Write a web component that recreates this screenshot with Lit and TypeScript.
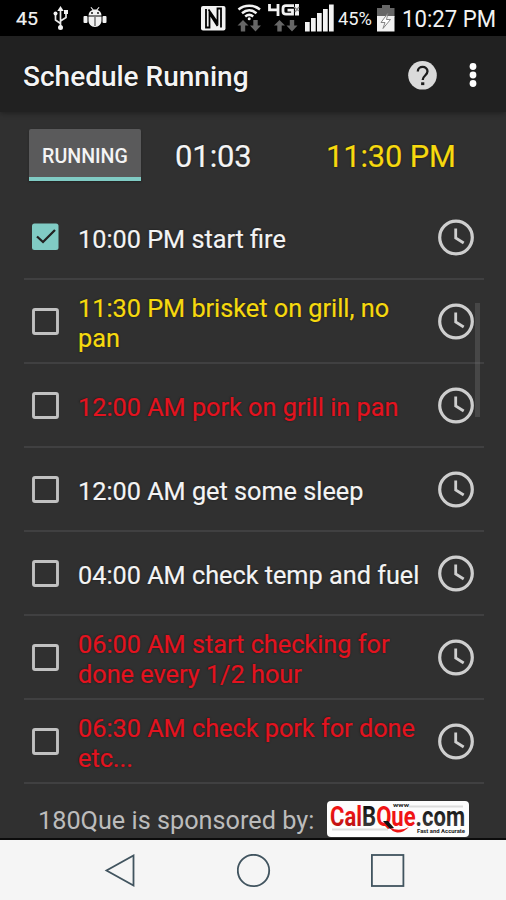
import { LitElement, html, css, svg } from "lit";
import { customElement, property } from "lit/decorators.js";
import { classMap } from "lit/directives/class-map.js";

interface Task {
  text: string;
  tone: "plain" | "next" | "alert";
  done?: boolean;
}

const TASKS: Task[] = [
  { text: "10:00 PM start fire", tone: "plain", done: true },
  { text: "11:30 PM brisket on grill, no pan", tone: "next" },
  { text: "12:00 AM pork on grill in pan", tone: "alert" },
  { text: "12:00 AM get some sleep", tone: "plain" },
  { text: "04:00 AM check temp and fuel", tone: "plain" },
  { text: "06:00 AM start checking for done every 1/2 hour", tone: "alert" },
  { text: "06:30 AM check pork for done etc...", tone: "alert" },
];

@customElement("status-bar")
class StatusBar extends LitElement {
  static styles = css`
    :host { display: block; height: 36px; background: #000; }
    svg { display: block; }
    text { font-family: Roboto, "Liberation Sans", sans-serif; }
    .white { fill: #f2f2f2; }
    .dim { fill: #666; }
    .wave { fill: none; stroke: #f2f2f2; stroke-width: 2.5; }
    .usb { fill: none; stroke: #e8e8e8; stroke-width: 1.7; }
    .slot { fill: none; stroke: #000; stroke-width: 1.8; }
    .net { fill: none; stroke: #f2f2f2; stroke-width: 2.8; }
  `;

  arrows(x: number) {
    return svg`
      <path class="dim" d="M${x} 25.500l5.500-5.500 5.500 5.500h-3.300v6h-4.400v-6z"/>
      <path class="dim" d="M${x + 12.5} 25.500l5.500 6 5.500-6h-3.300v-5.500h-4.400v5.500z"/>`;
  }

  render() {
    return html`<svg width="506" height="36" viewBox="0 0 506 36">
      <text class="white" x="16" y="25" font-size="19" textLength="22" lengthAdjust="spacingAndGlyphs" stroke="#f2f2f2" stroke-width=".2">45</text>
      <path class="usb" d="M60.500 27V9M60.500 23.500l-5-3.500v-6M60.500 21l5.500-3.500v-5"/>
      <path class="white" d="M60.500 6l3.200 5h-6.400z"/>
      <circle class="white" cx="60.500" cy="27.500" r="2.500"/>
      <circle class="white" cx="55.500" cy="13.500" r="2"/>
      <rect class="white" x="64" y="10" width="4" height="4"/>
      <path class="white" d="M88.500 15.500c0-3 2-5 4-5.500l-2-2.500.8-.6 2.200 2.600h3l2.200-2.600.8.6-2 2.500c2 .5 4 2.500 4 5.500zM88.500 16.500h13v4c0 3.500-2.500 6.500-6.500 6.500s-6.500-3-6.500-6.500z"/>
      <rect class="white" x="83.500" y="16" width="4" height="7" rx="1"/>
      <rect class="white" x="102.500" y="16" width="4" height="7" rx="1"/>
      <circle cx="92" cy="13" r=".9"/><circle cx="98" cy="13" r=".9"/>
      <path d="M94.600 17h.8v9h-.8z"/>

      <rect class="white" x="201" y="6" width="24.500" height="24.500" rx="2"/>
      <path class="slot" d="M206 9v18.500h3.500V13.500l8 12.500M221 27.500V8.500h-3.500v14L208.500 9.500"/>
      <path class="wave" d="M238.500 9.500c6-5 15.500-5 21.500 0M242 13.200c4.500-3.800 10-3.800 14.500 0M245.200 16.500c2.500-2 5.500-2 8 0"/>
      <circle class="white" cx="249.200" cy="18.800" r="1.500"/>
      ${this.arrows(237.5)}
      <path class="net" d="M269.500 4v5.800h9.500M278 4v12M294 5.600h-8q-3 0-3 2.800v3.200q0 2.600 3 2.600h6.500v-4h-5"/>
      <path class="white" d="M295 4h4v9h-4zM295 13h4v2.500h-4z"/>
      <path d="M294 7l5 4M295 12l4-5" stroke="#888" stroke-width="1.300"/>
      ${this.arrows(274)}
      <path class="white" d="M305 22h4.700v9.500H305zM311 18h4.700v13.500H311zM317 13h4.700v18.500H317zM323 9h4.700v22.500H323zM329 4.500h4.700v27H329z"/>
      <text class="white" x="338" y="25" font-size="18.500" textLength="34" lengthAdjust="spacingAndGlyphs">45%</text>
      <path class="dim" d="M382 5h8v3h4.500v9h-17.500V8h5z"/>
      <path class="white" d="M377 16h17.500v15.500H377z"/>
      <path d="M388 13l-7 9.500h4l-2 6 7.500-9h-4z" fill="#fff" stroke="#777" stroke-width=".9"/>
      <text class="white" x="402" y="26.500" font-size="23.500" textLength="94" lengthAdjust="spacingAndGlyphs">10:27 PM</text>
    </svg>`;
  }
}

@customElement("task-row")
class TaskRow extends LitElement {
  @property({ attribute: false }) task!: Task;

  static styles = css`
    :host { display: flex; align-items: center; box-sizing: border-box; height: 84px; border-bottom: 2px solid #404041; padding: 0 9px 0 7px; }
    svg { flex: none; display: block; }
    .label { flex: 1; margin: 5px 12px 0 19px; font-size: 25.25px; line-height: 30px; color: #f4f4f4; text-shadow: 0 0 2px #151515; -webkit-text-stroke: 0.2px currentColor; }
    .label.next { color: #f6d90f; }
    .label.alert { color: #e3131f; }
  `;

  render() {
    const { text, tone, done } = this.task;
    return html`
      <svg width="28" height="28" viewBox="0 0 28 28">
        ${done
          ? svg`<rect x="1" y="0.500" width="26.500" height="26.500" rx="2.500" fill="#80cbc4"/><path d="M6 13.500l6 5.500 12-12" fill="none" stroke="#222" stroke-width="2.300"/>`
          : svg`<rect x="2.500" y="2.500" width="24" height="24" rx="1.500" fill="none" stroke="#c1c1c1" stroke-width="2.900"/>`}
      </svg>
      <span class=${classMap({ label: true, [tone]: true })}>${text}</span>
      <svg width="38" height="38" viewBox="0 0 38 38" fill="none" stroke="#cecece">
        <circle cx="19" cy="19.500" r="16.300" stroke-width="3.200"/>
        <path d="M18.700 10.500v9.500l8 5" stroke-width="2.800"/>
      </svg>`;
  }
}

@customElement("sponsor-logo")
class SponsorLogo extends LitElement {
  static styles = css`
    :host { display: block; }
    svg { display: block; }
    text { font-family: Roboto, "Liberation Sans", sans-serif; font-weight: 700; }
  `;

  render() {
    return html`<svg width="142" height="36" viewBox="0 0 142 36">
      <defs>
        <linearGradient id="red" x1="0" y1="0" x2="0" y2="1"><stop offset=".35" stop-color="#f01414"/><stop offset="1" stop-color="#a31212"/></linearGradient>
        <linearGradient id="ink" x1="0" y1="0" x2="0" y2="1"><stop offset=".2" stop-color="#111"/><stop offset="1" stop-color="#484848"/></linearGradient>
      </defs>
      <rect width="142" height="36" rx="4" fill="#fdfdfd"/>
      <path d="M82 4.500h54v2H82zM5 27.500h56v2H5z" fill="#ddd"/>
      <text x="3" y="25" font-size="28" textLength="135" lengthAdjust="spacingAndGlyphs"><tspan fill="url(#red)">Cal</tspan><tspan fill="url(#ink)">B</tspan><tspan fill="#f01414">Que</tspan><tspan fill="url(#ink)">.com</tspan></text>
      <path d="M56 20l5 0 6 7-4 1z" fill="#111"/>
      <path d="M63 27q10 4 19-1-6 6-12 5.500-5-1-7-4.500z" fill="#ee1515"/>
      <text x="66" y="5.500" font-size="5" textLength="16" lengthAdjust="spacingAndGlyphs" fill="#222">www</text>
      <text x="90" y="31.500" font-size="5.500" textLength="48" lengthAdjust="spacingAndGlyphs" fill="#222">Fast and Accurate</text>
    </svg>`;
  }
}

@customElement("app-root")
class AppRoot extends LitElement {
  static styles = css`
    :host { display: flex; flex-direction: column; width: 506px; height: 900px; overflow: hidden; background: #303030; font-family: Roboto, "Liberation Sans", sans-serif; color: #f4f4f4; }
    svg { display: block; flex: none; }
    .appbar { height: 76px; flex: none; display: flex; align-items: center; padding: 4px 29px 0 23px; box-sizing: border-box; background: #212121; box-shadow: 0 1px 6px rgba(0, 0, 0, 0.4); }
    .title { flex: 1; font-size: 28px; font-weight: 500; text-shadow: 0 0 2px #000; }
    .help { margin-right: 32px; }
    .controls { height: 84px; flex: none; display: flex; align-items: center; padding: 2px 0 0 29px; box-sizing: border-box; }
    .toggle { width: 112px; height: 52px; box-sizing: border-box; display: flex; align-items: center; justify-content: center; background: #5a5a5b; border-radius: 2px 2px 0 0; border-bottom: 4px solid #80cbc4; font-size: 19.6px; font-weight: 500; padding-top: 7px; box-shadow: 0 1px 2px #222; }
    .elapsed { margin-left: 34px; width: 151px; font-size: 31px; letter-spacing: -0.1px; }
    .upcoming { font-size: 30.8px; letter-spacing: -0.1px; color: #f6d90f; }
    .elapsed, .upcoming { padding-top: 2px; text-shadow: 0 0 2px #111; -webkit-text-stroke: 0.2px currentColor; }
    .list { position: relative; flex: none; padding: 0 22px 0 24px; }
    .thumb { position: absolute; left: 475px; top: 107px; width: 5px; height: 114px; background: rgba(125, 125, 125, 0.3); }
    .sponsor { flex: 1; display: flex; align-items: center; padding: 16px 0 0 38px; gap: 13px; box-sizing: border-box; border-bottom: 2px solid #0c0c0c; font-size: 25.25px; color: #bcbcbc; }
    .sponsor span { padding-top: 3px; }
    .nav { height: 60px; flex: none; background: #f5f5f5; display: flex; align-items: center; padding: 2px 0 0 103px; gap: 100px; box-sizing: border-box; }
  `;

  render() {
    return html`
      <status-bar></status-bar>
      <div class="appbar">
        <div class="title">Schedule Running</div>
        <svg class="help" width="30" height="30" viewBox="0 0 30 30">
          <circle cx="15.500" cy="14.300" r="14.300" fill="#dadada"/>
          <path d="M10.800 10.500c0-6 9.700-6 9.700-.2 0 4.200-4.800 4.200-4.800 8.700" fill="none" stroke="#1c1c1c" stroke-width="2.300"/>
          <rect x="14.100" y="21.300" width="3.200" height="2.800" fill="#1c1c1c"/>
        </svg>
        <svg width="8" height="26" viewBox="0 0 8 26" fill="#fff">
          <circle cx="4" cy="3.500" r="3.400"/><circle cx="4" cy="12" r="3.400"/><circle cx="4" cy="20.500" r="3.400"/>
        </svg>
      </div>
      <div class="controls">
        <div class="toggle">RUNNING</div>
        <div class="elapsed">01:03</div>
        <div class="upcoming">11:30 PM</div>
      </div>
      <div class="list">
        ${TASKS.map((task) => html`<task-row .task=${task}></task-row>`)}
        <div class="thumb"></div>
      </div>
      <div class="sponsor"><span>180Que is sponsored by:</span><sponsor-logo></sponsor-logo></div>
      <div class="nav">
        <svg width="34" height="34" viewBox="0 0 34 34" fill="none" stroke="#41545f" stroke-width="1.800"><path d="M30.500 1.500v30L3.500 16.500z"/></svg>
        <svg width="34" height="34" viewBox="0 0 34 34" fill="none" stroke="#41545f" stroke-width="1.800"><circle cx="16.500" cy="16.500" r="15.700"/></svg>
        <svg width="34" height="34" viewBox="0 0 34 34" fill="none" stroke="#41545f" stroke-width="1.800"><rect x="0.900" y="1" width="31.500" height="31"/></svg>
      </div>`;
  }
}
